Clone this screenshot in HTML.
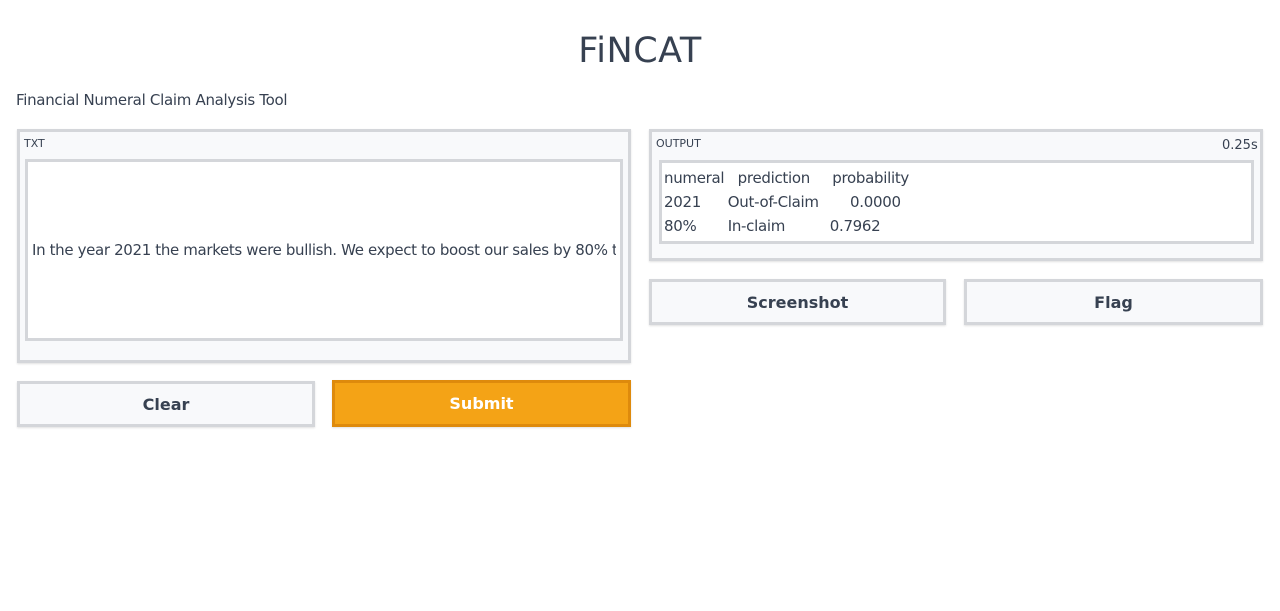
<!DOCTYPE html>
<html><head><style>
*{box-sizing:border-box;margin:0;padding:0}
body{width:1280px;height:611px;background:#fff;font-family:"DejaVu Sans","Liberation Sans",sans-serif;color:#374151;position:relative;overflow:hidden}
.a{position:absolute}
.box{border:3px solid #d4d6da;background:#f8f9fb;box-shadow:0 1px 2px rgba(0,0,0,.12)}
.inner{border:3px solid #d4d6da;background:#fff}
.lbl{font-size:11px;color:#374151}
.btn{border:3px solid #d4d6da;background:#f8f9fb;font-weight:bold;font-size:16px;display:flex;align-items:center;justify-content:center;box-shadow:0 1px 2px rgba(0,0,0,.12)}
.row{font-size:15px;height:24px;line-height:24px;white-space:pre}
</style></head><body>
<div class="a" style="left:0;width:1280px;top:31px;text-align:center;font-size:35px;color:#374151;letter-spacing:0.5px">FiNCAT</div>
<div class="a" style="left:16px;top:91px;font-size:15px;letter-spacing:-0.3px">Financial Numeral Claim Analysis Tool</div>

<div class="a box" style="left:17px;top:129px;width:614px;height:234px"></div>
<div class="a lbl" style="left:24px;top:137px">TXT</div>
<div class="a inner" style="left:25px;top:159px;width:598px;height:182px;overflow:hidden">
<div style="position:absolute;left:4px;top:79px;width:584px;overflow:hidden;white-space:nowrap;font-size:15px;letter-spacing:-0.35px">In the year 2021 the markets were bullish. We expect to boost our sales by 80% this year.</div></div>

<div class="a btn" style="left:17px;top:381px;width:298px;height:46px">Clear</div>
<div class="a btn" style="left:332px;top:380px;width:299px;height:47px;background:#f4a316;border-color:#de8a0c;color:#fff">Submit</div>

<div class="a box" style="left:649px;top:129px;width:614px;height:132px"></div>
<div class="a lbl" style="left:656px;top:137px">OUTPUT</div>
<div class="a" style="left:1222px;top:138px;font-size:13px">0.25s</div>
<div class="a inner" style="left:659px;top:160px;width:595px;height:84px;padding:3px 0 0 2px;letter-spacing:-0.3px">
<div class="row">numeral   prediction     probability</div>
<div class="row">2021      Out-of-Claim       0.0000</div>
<div class="row">80%       In-claim          0.7962</div>
</div>

<div class="a btn" style="left:649px;top:279px;width:297px;height:46px">Screenshot</div>
<div class="a btn" style="left:964px;top:279px;width:299px;height:46px">Flag</div>
</body></html>
